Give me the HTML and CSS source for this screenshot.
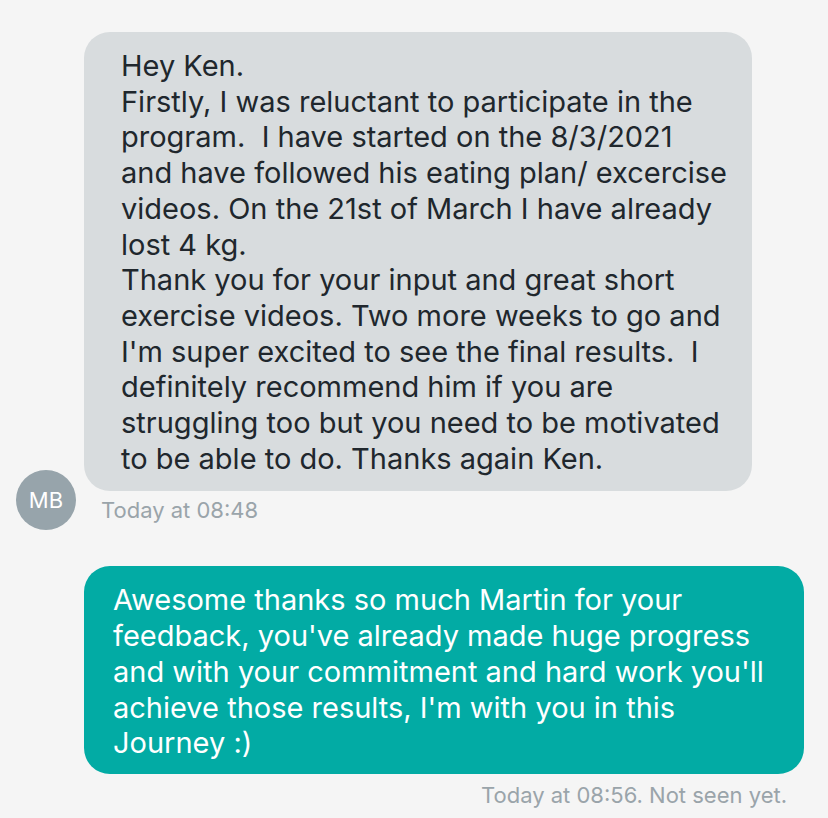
FILE: index.html
```html
<!DOCTYPE html>
<html>
<head>
<meta charset="utf-8">
<link rel="stylesheet" href="styles.css">
</head>
<body>
<div class="thread">
  <div class="msg-in">
    <div class="avatar">MB</div>
    <div class="col-in">
      <div class="bubble bubble-in">Hey Ken.<br>Firstly, I was reluctant to participate in the<br>program.&nbsp; I have started on the 8/3/2021<br>and have followed his eating plan/ excercise<br>videos. On the 21st of March I have already<br>lost 4 kg.<br>Thank you for your input and great short<br>exercise videos. Two more weeks to go and<br>I'm super excited to see the final results.&nbsp; I<br>definitely recommend him if you are<br>struggling too but you need to be motivated<br>to be able to do. Thanks again Ken.</div>
      <div class="meta meta-in">Today at 08:48</div>
    </div>
  </div>
  <div class="msg-out">
    <div class="bubble bubble-out">Awesome thanks so much Martin for your<br>feedback, you've already made huge progress<br>and with your commitment and hard work you'll<br>achieve those results, I'm with you in this<br>Journey :)</div>
    <div class="meta meta-out">Today at 08:56. Not seen yet.</div>
  </div>
</div>
</body>
</html>
```
FILE: styles.css
```css
html, body {
  margin: 0;
  padding: 0;
  background: #f5f5f5;
}
body {
  font-family: Inter, "Noto Sans", sans-serif;
  width: 828px;
  height: 818px;
  overflow: hidden;
}
.thread {
  padding: 32px 24px 0 16px;
  display: flex;
  flex-direction: column;
}
.msg-in {
  display: flex;
  align-items: flex-end;
  gap: 8px;
}
.avatar {
  width: 60px;
  height: 60px;
  border-radius: 50%;
  background: #97a4ab;
  color: #fff;
  font-size: 22px;
  display: flex;
  align-items: center;
  justify-content: center;
  flex: none;
  margin-bottom: -6px;
}
.col-in {
  display: flex;
  flex-direction: column;
}
.bubble {
  font-size: 29px;
  line-height: 35.7px;
  border-radius: 26px;
  box-sizing: border-box;
  white-space: nowrap;
}
.bubble-in {
  width: 668px;
  background: #d8dcde;
  color: #20272d;
  padding: 16px 20px 15px 37px;
}
.meta {
  font-size: 22px;
  color: #9aa4aa;
  line-height: 28px;
}
.meta-in {
  margin: 5px 0 0 17px;
}
.msg-out {
  margin: 42px 0 0 68px;
  display: flex;
  flex-direction: column;
  align-items: flex-end;
}
.bubble-out {
  width: 720px;
  background: #02aba4;
  color: #fff;
  padding: 16px 20px 13px 29px;
}
.meta-out {
  margin: 7px 17px 0 0;
}
```
